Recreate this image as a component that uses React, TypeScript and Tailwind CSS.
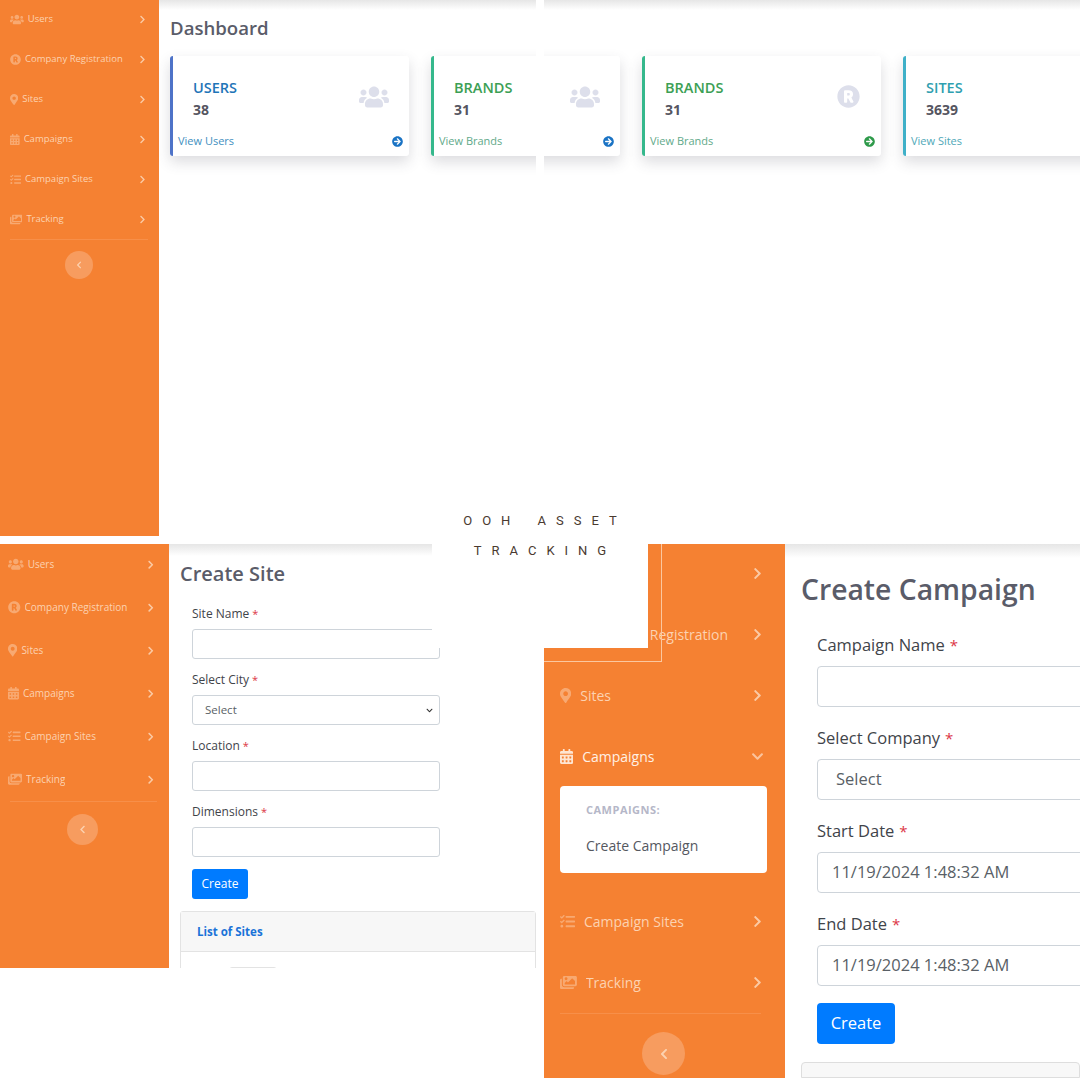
import {
  FaArrowCircleRight,
  FaCalendarAlt,
  FaChevronDown,
  FaChevronLeft,
  FaChevronRight,
  FaImages,
  FaMapMarkerAlt,
  FaRegistered,
  FaTasks,
  FaUsers,
} from "react-icons/fa";
import type { ReactNode } from "react";

const navItems = [
  { label: "Users", icon: FaUsers, iconWidth: "w-[1.25em]" },
  { label: "Company Registration", icon: FaRegistered, iconWidth: "w-[1em]" },
  { label: "Sites", icon: FaMapMarkerAlt, iconWidth: "w-[0.75em]" },
  { label: "Campaigns", icon: FaCalendarAlt, iconWidth: "w-[0.875em]" },
  { label: "Campaign Sites", icon: FaTasks, iconWidth: "w-[1em]" },
  { label: "Tracking", icon: FaImages, iconWidth: "w-[1.125em]" },
];

type SidebarProps = {
  width: string;
  row: string;
  text: string;
  icon: string;
  chevron: string;
  divider: string;
  round: string;
  roundIcon: string;
  openItem?: string;
  submenu?: ReactNode;
};

const Sidebar = ({ width, row, text, icon, chevron, divider, round, roundIcon, openItem, submenu }: SidebarProps) => {
  return (
    <div className={`${width} shrink-0 h-full bg-[#f58132] flex flex-col`}>
      <div className="-mt-px">
        {navItems.map((item) => {
          const Icon = item.icon;
          const open = item.label === openItem;
          return (
            <div key={item.label}>
              <div className={`${row} flex items-center ${open ? "text-[#fff0e4]" : "text-[#fcd2b1]"} ${text}`}>
                <Icon className={`${icon} ${item.iconWidth} shrink-0 ${open ? "opacity-90" : "opacity-50"}`} />
                <span className="truncate">{item.label}</span>
                {open ? (
                  <FaChevronDown className={`${chevron} ml-auto shrink-0 opacity-60`} />
                ) : (
                  <FaChevronRight className={`${chevron} ml-auto shrink-0 opacity-90`} />
                )}
              </div>
              {open && submenu}
            </div>
          );
        })}
      </div>
      <div className={`${divider} border-t border-[#f78f49]`} />
      <div className={`${round} rounded-full bg-[#f79c5f] self-start flex items-center justify-center`}>
        <FaChevronLeft className={`${roundIcon} text-[#fcd2b1]`} />
      </div>
    </div>
  );
};

const TopShadow = ({ height }: { height: string }) => (
  <div className={`${height} shrink-0 bg-gradient-to-b from-[#e6e6e6] to-white`} />
);

type StatCardProps = {
  title: string;
  value: string;
  link: string;
  border: string;
  titleColor: string;
  linkColor: string;
  arrowColor: string;
  icon?: ReactNode;
};

const StatCard = ({ title, value, link, border, titleColor, linkColor, arrowColor, icon }: StatCardProps) => {
  return (
    <div className={`w-[239px] h-[100px] shrink-0 bg-white rounded-[3px] border-l-[3px] ${border} shadow-[0_6px_14px_rgba(60,60,80,0.18)] flex flex-col`}>
      <div className="flex items-start justify-between pl-[20px] pr-[20px] pt-[22px] h-[77px]">
        <div>
          <div className={`${titleColor} text-[14.5px] font-semibold leading-[20px]`}>{title}</div>
          <div className="text-[#555560] text-[14px] font-bold leading-[20px] mt-[2px]">{value}</div>
        </div>
        <div className="text-[#dddfeb] mt-[7px]">{icon}</div>
      </div>
      <div className="flex items-center justify-between pl-[5px] pr-[6px]">
        <span className={`${linkColor} text-[11px]`}>{link}</span>
        <FaArrowCircleRight className={`${arrowColor} text-[11px]`} />
      </div>
    </div>
  );
};

const usersCard = (
  <StatCard
    title="USERS"
    value="38"
    link="View Users"
    border="border-[#4e73c8]"
    titleColor="text-[#1f75b8]"
    linkColor="text-[#3f8fc0]"
    arrowColor="text-[#1a73c4]"
    icon={<FaUsers className="text-[30px] -mt-[3px]" />}
  />
);

const brandsCard = (
  <StatCard
    title="BRANDS"
    value="31"
    link="View Brands"
    border="border-[#35b88c]"
    titleColor="text-[#3c9f55]"
    linkColor="text-[#5fa98a]"
    arrowColor="text-[#2e9a4a]"
    icon={<FaRegistered className="text-[23px] mr-[1px]" />}
  />
);

const sitesCard = (
  <StatCard
    title="SITES"
    value="3639"
    link="View Sites"
    border="border-[#3fb0c8]"
    titleColor="text-[#2f9fb0]"
    linkColor="text-[#4fa8b8]"
    arrowColor="text-[#2f9fb0]"
  />
);

const SmallField = ({ label, children }: { label: string; children?: ReactNode }) => (
  <div className="w-[248px]">
    <div className="text-[12px] leading-[16px] text-[#3f444a] mb-[7px]">
      {label}
      <span className="text-[#dc3545] text-[11px] ml-[3px]">*</span>
    </div>
    <div className="h-[30px] border border-[#ced4da] rounded-[3px] bg-white flex items-center px-[12px] text-[11.5px] text-[#595f66]">
      {children}
    </div>
  </div>
);

const LargeField = ({ label, children }: { label: string; children?: ReactNode }) => (
  <div>
    <div className="text-[16.5px] leading-[22px] text-[#3f444a] mb-[10px]">
      {label}
      <span className="text-[#dc3545] text-[15px] ml-[5px]">*</span>
    </div>
    <div className="h-[41px] w-[300px] border border-[#ced4da] rounded-[4px] bg-white flex items-center pl-[14px] text-[16.5px] text-[#595f66]">
      {children}
    </div>
  </div>
);

const App = () => {
  return (
    <div className="relative w-[1080px] h-[1080px] bg-white overflow-hidden font-['Open_Sans',sans-serif]">
      <div className="grid grid-cols-[536px_536px] grid-rows-[536px_536px] gap-[8px]">
        {/* dashboard, left part */}
        <section className="flex overflow-hidden">
          <Sidebar
            width="w-[159px]"
            row="h-[40px] pl-[10px] pr-[12px] gap-[4px]"
            text="text-[9.5px]"
            icon="text-[11px]"
            chevron="text-[9px]"
            divider="mx-[10px] w-[138px]"
            round="w-[28px] h-[28px] mt-[11px] ml-[65px]"
            roundIcon="text-[8px]"
          />
          <div className="flex-1 min-w-0 flex flex-col">
            <TopShadow height="h-[10px]" />
            <h1 className="pl-[11px] mt-[4px] text-[18.6px] leading-[28px] font-semibold text-[#5a5c69]">Dashboard</h1>
            <div className="flex gap-[22px] pl-[11px] mt-[14px]">
              {usersCard}
              {brandsCard}
            </div>
          </div>
        </section>

        {/* dashboard, right part */}
        <section className="flex flex-col overflow-hidden">
          <TopShadow height="h-[10px]" />
          <div className="flex gap-[22px] -ml-[163px] mt-[46px]">
            {usersCard}
            {brandsCard}
            {sitesCard}
          </div>
        </section>

        {/* create site */}
        <section className="flex overflow-hidden h-[424px]">
          <Sidebar
            width="w-[169px]"
            row="h-[43px] pl-[8px] pr-[14px] gap-[4px]"
            text="text-[10px]"
            icon="text-[12.5px]"
            chevron="text-[9.5px]"
            divider="mx-[10px] w-[147px]"
            round="w-[31px] h-[31px] mt-[12px] ml-[67px]"
            roundIcon="text-[9px]"
          />
          <div className="flex-1 min-w-0 flex flex-col pl-[11px]">
            <div className="-ml-[11px]">
              <TopShadow height="h-[12px]" />
            </div>
            <h1 className="mt-[4px] text-[20px] leading-[28px] font-semibold text-[#5a5c69]">Create Site</h1>
            <div className="pl-[12px] mt-[18px] flex flex-col gap-[13px]">
              <SmallField label="Site Name" />
              <SmallField label="Select City">
                <span>Select</span>
                <FaChevronDown className="ml-auto -mr-[6px] text-[7px] text-[#333]" />
              </SmallField>
              <SmallField label="Location" />
              <SmallField label="Dimensions" />
            </div>
            <div className="pl-[12px] mt-[12px]">
              <button className="w-[56px] h-[30px] bg-[#007bff] rounded-[3px] text-white text-[12px]">Create</button>
            </div>
            <div className="mt-[12px] border border-[#e3e3e3] rounded-t-[3px] flex-1">
              <div className="h-[40px] bg-[#f7f7f7] border-b border-[#e3e3e3] flex items-center pl-[16px] text-[11.5px] font-bold text-[#1a73d8]">
                List of Sites
              </div>
              <div className="ml-[48px] mt-[15px] w-[48px] h-[10px] border border-[#e3e3e3] rounded-t-[3px]" />
            </div>
          </div>
        </section>

        {/* create campaign */}
        <section className="flex overflow-hidden h-[534px]">
          <Sidebar
            width="w-[241px]"
            row="h-[61px] pl-[16px] pr-[21px] gap-[9px]"
            text="text-[14px]"
            icon="text-[15px]"
            chevron="text-[13px]"
            divider="mx-[16px] w-[201px]"
            round="w-[43px] h-[43px] mt-[18px] ml-[98px]"
            roundIcon="text-[12px]"
            openItem="Campaigns"
            submenu={
              <div className="ml-[16px] mr-[18px] -mt-[1px] mb-[18px] h-[87px] bg-white rounded-[4px] pl-[26px] pt-[17px]">
                <div className="text-[11px] tracking-[0.5px] leading-[14px] font-bold text-[#b5b7c8]">CAMPAIGNS:</div>
                <div className="mt-[19px] text-[14px] leading-[20px] text-[#55585f]">Create Campaign</div>
              </div>
            }
          />
          <div className="flex-1 min-w-0 flex flex-col pl-[16px]">
            <div className="-ml-[16px]">
              <TopShadow height="h-[14px]" />
            </div>
            <h1 className="mt-[10px] text-[28.3px] leading-[42px] font-semibold text-[#5a5c69]">Create Campaign</h1>
            <div className="pl-[16px] mt-[24px] flex flex-col gap-[20px]">
              <LargeField label="Campaign Name" />
              <LargeField label="Select Company">
                <span className="pl-[4px]">Select</span>
              </LargeField>
              <LargeField label="Start Date">11/19/2024 1:48:32 AM</LargeField>
              <LargeField label="End Date">11/19/2024 1:48:32 AM</LargeField>
            </div>
            <div className="pl-[16px] mt-[17px]">
              <button className="w-[78px] h-[41px] bg-[#007bff] rounded-[4px] text-white text-[16.5px]">Create</button>
            </div>
            <div className="mt-[18px] flex-1 border border-[#dedede] rounded-t-[4px] bg-[#f8f8f8]" />
          </div>
        </section>
      </div>

      {/* thin frame round the title block, only seen on the orange panel */}
      <div className="absolute left-[544px] top-[544px] w-[118px] h-[118px] border-r border-b border-[#fbc79f]" />

      {/* title block over the middle of the collage */}
      <div className="absolute left-[432px] top-[500px] w-[216px] h-[148px] bg-white flex flex-col items-center pt-[6px] pl-[10px] font-['Roboto',sans-serif] text-[13px] leading-[30px] tracking-[10px] [word-spacing:4px] text-[#4a3a30]">
        <div className="whitespace-nowrap">OOH ASSET</div>
        <div>TRACKING</div>
      </div>
    </div>
  );
};

export default App;
